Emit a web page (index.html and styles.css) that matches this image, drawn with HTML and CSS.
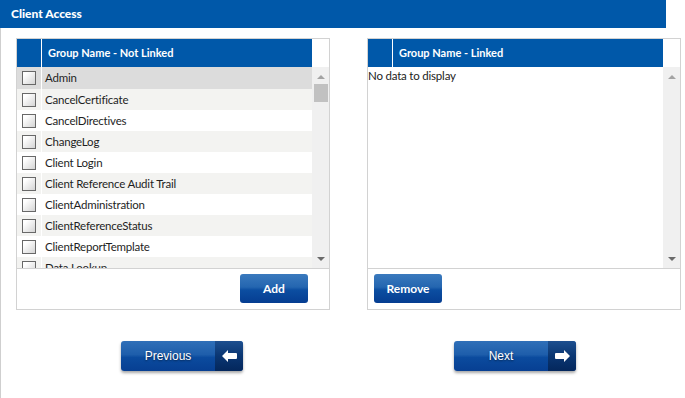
FILE: index.html
```html
<!DOCTYPE html>
<html lang="en">
<head>
  <meta charset="UTF-8" />
  <title>Client Access</title>
  <link rel="stylesheet" href="styles.css">
</head>
<body>
  <div class="title-bar">Client Access</div>

  <div class="content">
    <div class="lists">
      <!-- not linked groups -->
      <div class="panel">
        <div class="grid-head">
          <div class="head-chk"></div>
          <div class="head-name">Group Name - Not Linked</div>
          <div class="head-gap"></div>
        </div>
        <div class="grid-body">
          <div class="rows">
            <div class="row selected"><div class="cell-chk"><span class="chk"></span></div><div class="cell-name">Admin</div></div>
            <div class="row"><div class="cell-chk"><span class="chk"></span></div><div class="cell-name">CancelCertificate</div></div>
            <div class="row"><div class="cell-chk"><span class="chk"></span></div><div class="cell-name">CancelDirectives</div></div>
            <div class="row"><div class="cell-chk"><span class="chk"></span></div><div class="cell-name">ChangeLog</div></div>
            <div class="row"><div class="cell-chk"><span class="chk"></span></div><div class="cell-name">Client Login</div></div>
            <div class="row"><div class="cell-chk"><span class="chk"></span></div><div class="cell-name">Client Reference Audit Trail</div></div>
            <div class="row"><div class="cell-chk"><span class="chk"></span></div><div class="cell-name">ClientAdministration</div></div>
            <div class="row"><div class="cell-chk"><span class="chk"></span></div><div class="cell-name">ClientReferenceStatus</div></div>
            <div class="row"><div class="cell-chk"><span class="chk"></span></div><div class="cell-name">ClientReportTemplate</div></div>
            <div class="row"><div class="cell-chk"><span class="chk"></span></div><div class="cell-name">Data Lookup</div></div>
          </div>
          <div class="vscroll">
            <span class="arrow-up"></span>
            <div class="track"><span class="thumb"></span></div>
            <span class="arrow-down"></span>
          </div>
        </div>
        <div class="panel-foot foot-right">
          <button class="btn">Add</button>
        </div>
      </div>

      <!-- linked groups -->
      <div class="panel">
        <div class="grid-head">
          <div class="head-chk"></div>
          <div class="head-name">Group Name - Linked</div>
          <div class="head-gap"></div>
        </div>
        <div class="grid-body">
          <div class="rows">
            <div class="empty">No data to display</div>
          </div>
          <div class="vscroll">
            <span class="arrow-up"></span>
            <div class="track"></div>
            <span class="arrow-down"></span>
          </div>
        </div>
        <div class="panel-foot">
          <button class="btn">Remove</button>
        </div>
      </div>
    </div>

    <div class="nav">
      <button class="nav-btn">
        <span class="nav-label">Previous</span>
        <span class="nav-icon">
          <svg width="15" height="12" viewBox="0 0 15 12"><path d="M0 6 L6 0 L6 3 L14 3 Q15 3 15 4 L15 8 Q15 9 14 9 L6 9 L6 12 Z" fill="#fff"/></svg>
        </span>
      </button>
      <button class="nav-btn">
        <span class="nav-label">Next</span>
        <span class="nav-icon">
          <svg width="15" height="12" viewBox="0 0 15 12"><path d="M15 6 L9 0 L9 3 L1 3 Q0 3 0 4 L0 8 Q0 9 1 9 L9 9 L9 12 Z" fill="#fff"/></svg>
        </span>
      </button>
    </div>
  </div>
</body>
</html>
```

FILE: styles.css
```css
/* page frame */
body {
  margin: 0;
  font-family: Lato, "Open Sans", sans-serif;
  font-size: 12px;
  color: #1e1e1e;
  background: #fff;
}

.title-bar {
  width: 655px;
  height: 28px;
  line-height: 28px;
  padding-left: 11px;
  background: #0058a9;
  color: #fff;
  font-weight: 900;
  font-size: 12px;
}

.content {
  border-left: 1px solid #cfcfcf;
  min-height: calc(100vh - 28px);
  box-sizing: border-box;
  padding: 10px 0 0 15px;
}

.lists {
  display: flex;
  gap: 37px;
}

/* grid panels */
.panel {
  width: 314px;
  border: 1px solid #d2d2d2;
  box-sizing: border-box;
}

.grid-head {
  display: flex;
  height: 28px;
}

.head-chk {
  width: 24px;
  background: #0058a9;
  border-right: 1px solid #fff;
}

.head-name {
  width: 264px;
  padding-left: 6px;
  background: #0058a9;
  color: #fff;
  font-weight: bold;
  font-size: 11px;
  line-height: 28px;
}

.head-gap {
  width: 17px;
  background: #fff;
}

.grid-body {
  display: flex;
  height: 201px;
  border-bottom: 1px solid #d2d2d2;
}

.rows {
  width: 295px;
  overflow: hidden;
}

.row {
  display: flex;
  height: 21px;
}

.row:first-child {
  height: 22px;
}

.row:nth-child(even) {
  background: #f3f3f1;
}

.row.selected {
  background: #dcdcdc;
}

.cell-chk {
  width: 24px;
  border-right: 1px solid #fff;
  display: flex;
  align-items: center;
  justify-content: center;
}

.chk {
  width: 12px;
  height: 12px;
  border: 1px solid #686868;
  background: linear-gradient(135deg, #ffffff 20%, #d4d4d4 100%);
}

.cell-name {
  flex: 1;
  padding-left: 3px;
  line-height: 22px;
  font-size: 11.5px;
  letter-spacing: -0.2px;
  white-space: nowrap;
}

.empty {
  line-height: 17px;
  font-size: 11.5px;
  letter-spacing: -0.2px;
  color: #222;
}

/* fake scrollbar */
.vscroll {
  width: 17px;
  background: #f0f0f0;
  display: flex;
  flex-direction: column;
  align-items: center;
}

.arrow-up,
.arrow-down {
  width: 0;
  height: 0;
  border-left: 4px solid transparent;
  border-right: 4px solid transparent;
}

.arrow-up {
  margin-top: 8px;
  border-bottom: 4px solid #a3a3a3;
}

.arrow-down {
  margin-bottom: 7px;
  border-top: 4px solid #6a6a6a;
}

.track {
  flex: 1;
  width: 100%;
  padding-top: 5px;
  display: flex;
  justify-content: center;
}

.thumb {
  width: 14px;
  height: 18px;
  background: #c1c1c1;
}

.panel-foot {
  height: 40px;
  padding: 5px 0 0 6px;
  box-sizing: border-box;
}

.foot-right {
  display: flex;
  justify-content: flex-end;
  padding: 5px 21px 0 0;
}

.btn {
  width: 68px;
  height: 29px;
  border: none;
  border-radius: 3px;
  color: #fff;
  font-family: Lato, "Open Sans", sans-serif;
  font-size: 12px;
  font-weight: bold;
  background: linear-gradient(#3a79bd 0%, #2466b0 45%, #0c4ea1 55%, #053d91 100%);
  cursor: pointer;
}

/* previous / next */
.nav {
  display: flex;
  gap: 211px;
  padding: 31px 0 0 105px;
}

.nav-btn {
  display: flex;
  width: 122px;
  height: 30px;
  padding: 0;
  border: none;
  border-radius: 3px;
  overflow: hidden;
  background: linear-gradient(#2f6fb8 0%, #1e5eab 45%, #0b4b9e 55%, #073f92 100%);
  box-shadow: 0 2px 3px rgba(0, 0, 0, 0.35);
  cursor: pointer;
}

.nav-label {
  flex: 1;
  line-height: 30px;
  color: #fff;
  font-family: "Liberation Sans", Arial, sans-serif;
  font-size: 12px;
  text-shadow: 0 1px 2px rgba(0, 0, 0, 0.5);
}

.nav-icon {
  width: 28px;
  display: flex;
  align-items: center;
  justify-content: center;
  background: linear-gradient(#1d4f8f 0%, #0a3672 50%, #04275c 100%);
}
```
